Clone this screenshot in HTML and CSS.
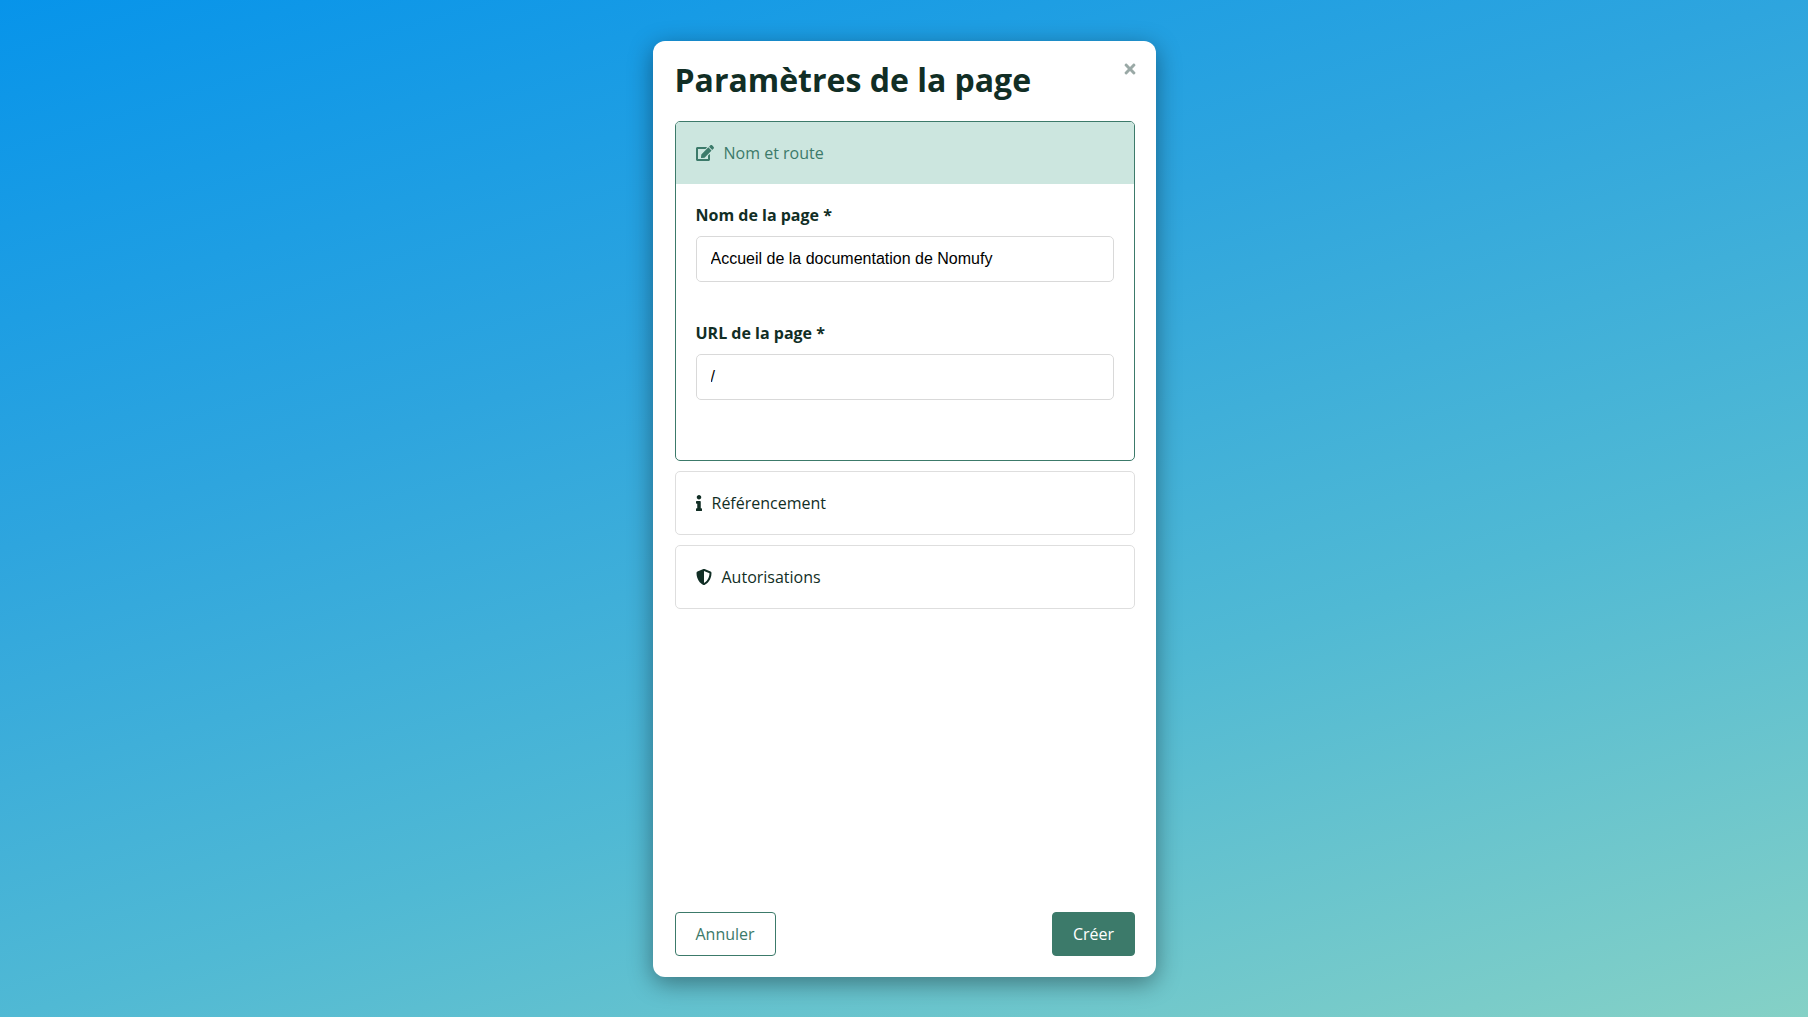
FILE: index.html
```html
<!DOCTYPE html>
<html lang="fr">
<head>
<title>Paramètres de la page</title>
<meta charset="UTF-8">
<link rel="stylesheet" href="styles.css">
</head>

<body>

<div class="modal">
    <button class="close-btn" aria-label="Fermer">
        <svg class="close-icon" viewBox="0 0 352 512"><path d="M242.72 256l100.07-100.07c12.28-12.28 12.28-32.19 0-44.48l-22.24-22.24c-12.28-12.28-32.19-12.28-44.48 0L176 189.28 75.93 89.21c-12.28-12.28-32.19-12.28-44.48 0L9.21 111.45c-12.28 12.28-12.28 32.19 0 44.48L109.28 256 9.21 356.07c-12.28 12.28-12.28 32.19 0 44.48l22.24 22.24c12.28 12.28 32.2 12.28 44.48 0L176 322.72l100.07 100.07c12.28 12.28 32.2 12.28 44.48 0l22.24-22.24c12.28-12.28 12.28-32.19 0-44.48L242.72 256z"/></svg>
    </button>

    <h1>Paramètres de la page</h1>

    <div class="sections">
        <!-- Open section -->
        <section class="section open">
            <div class="section-head">
                <svg class="icon icon-edit" viewBox="0 0 576 512"><path d="M402.6 83.2l90.2 90.2c3.8 3.8 3.8 10 0 13.8L274.4 405.6l-92.8 10.3c-12.4 1.4-22.9-9.1-21.5-21.5l10.3-92.8L388.8 83.2c3.8-3.8 10-3.8 13.8 0zm162-22.9l-48.8-48.8c-15.2-15.2-39.9-15.2-55.2 0l-35.4 35.4c-3.8 3.8-3.8 10 0 13.8l90.2 90.2c3.8 3.8 10 3.8 13.8 0l35.4-35.4c15.2-15.3 15.2-40 0-55.2zM384 346.2V448H64V128h229.8c3.2 0 6.2-1.3 8.5-3.5l40-40c7.6-7.6 2.2-20.5-8.5-20.5H48C21.5 64 0 85.5 0 112v352c0 26.5 21.5 48 48 48h352c26.5 0 48-21.5 48-48V306.2c0-10.7-12.9-16-20.5-8.5l-40 40c-2.2 2.3-3.5 5.3-3.5 8.5z"/></svg>
                <span>Nom et route</span>
            </div>
            <div class="section-body">
                <div class="field">
                    <label for="pageName">Nom de la page *</label>
                    <input type="text" id="pageName" value="Accueil de la documentation de Nomufy">
                </div>
                <div class="field">
                    <label for="pageUrl">URL de la page *</label>
                    <input type="text" id="pageUrl" value="/">
                </div>
            </div>
        </section>

        <section class="section">
            <div class="section-head">
                <svg class="icon icon-info" viewBox="0 0 192 512"><path d="M20 424.229h20V279.771H20c-11.046 0-20-8.954-20-20V212c0-11.046 8.954-20 20-20h112c11.046 0 20 8.954 20 20v212.229h20c11.046 0 20 8.954 20 20V492c0 11.046-8.954 20-20 20H20c-11.046 0-20-8.954-20-20v-47.771c0-11.046 8.954-20 20-20zM96 0C56.235 0 24 32.235 24 72s32.235 72 72 72 72-32.235 72-72S135.764 0 96 0z"/></svg>
                <span>Référencement</span>
            </div>
        </section>

        <section class="section">
            <div class="section-head">
                <svg class="icon icon-shield" viewBox="0 0 512 512"><path d="M466.5 83.7l-192-80a48.15 48.15 0 0 0-36.9 0l-192 80C27.7 91.1 16 108.6 16 128c0 198.5 114.5 335.7 221.5 380.3 11.8 4.9 25.1 4.9 36.9 0C360.1 472.6 496 349.3 496 128c0-19.4-11.7-36.9-29.5-44.3zM256.1 446.3l-.1-381 175.9 73.3c-3.3 151.4-82.1 261.1-175.8 307.7z"/></svg>
                <span>Autorisations</span>
            </div>
        </section>
    </div>

    <div class="modal-footer">
        <button class="btn btn-outline">Annuler</button>
        <button class="btn btn-primary">Créer</button>
    </div>
</div>

</body>
</html>
```

FILE: styles.css
```css
* {box-sizing: border-box;}

html, body {
    height: 100%;
}

body {
    margin: 0;
    font-family: 'Open Sans', sans-serif;
    font-size: 16px;
    color: #112e25;
    background: linear-gradient(163deg, #0794ea 0%, #2ea5de 35%, #50b9d4 65%, #85d1c6 100%);
    display: flex;
    justify-content: center;
    align-items: center;
}

.modal {
    position: relative;
    display: flex;
    flex-direction: column;
    width: 503px;
    height: 936px;
    padding: 17px 21px 21px 22px;
    background-color: #fff;
    border-radius: 12px;
    box-shadow: 0 6px 24px rgba(0, 0, 0, 0.4);
}

.close-btn {
    position: absolute;
    top: 20px;
    right: 20px;
    padding: 0;
    border: none;
    background: none;
    line-height: 0;
    cursor: pointer;
}

.close-icon {
    width: 12px;
    height: 16px;
    fill: #9aa9a6;
}

h1 {
    margin: 0 0 19px;
    font-size: 32px;
    font-weight: 700;
    line-height: 44px;
    color: #112e25;
}

.sections {
    flex: 1;
    display: flex;
    flex-direction: column;
    gap: 10px;
}

.section {
    border: 1px solid #dedede;
    border-radius: 5px;
}

.section.open {
    border-color: #3c7a6a;
    overflow: hidden;
}

.section-head {
    display: flex;
    align-items: center;
    gap: 10px;
    height: 62px;
    padding: 0 20px;
}

.open .section-head {
    background-color: #cce6df;
    color: #3c7a6a;
}

.icon {
    height: 16px;
    fill: currentColor;
}

.icon-edit { width: 18px; }
.icon-info { width: 6px; }
.icon-shield { width: 16px; }

.section-body {
    display: flex;
    flex-direction: column;
    gap: 40px;
    height: 276px;
    padding: 20px 20px 0;
}

.field label {
    display: block;
    margin-bottom: 10px;
    font-weight: 700;
    line-height: 22px;
}

.field input {
    display: block;
    width: 100%;
    height: 46px;
    padding: 0 14px;
    border: 1px solid #d9d9d9;
    border-radius: 5px;
    font-family: 'Liberation Sans', Arial, sans-serif;
    font-size: 16px;
    color: #000;
}

.modal-footer {
    display: flex;
    justify-content: space-between;
}

.btn {
    height: 44px;
    padding: 0 20px;
    border: 1px solid #3c7a6a;
    border-radius: 4px;
    font-family: 'Open Sans', sans-serif;
    font-size: 16px;
    cursor: pointer;
}

.btn-outline {
    background-color: #fff;
    color: #3c7a6a;
}

.btn-primary {
    padding: 0 19.5px;
    background-color: #3c7a6a;
    color: #fff;
}
```
